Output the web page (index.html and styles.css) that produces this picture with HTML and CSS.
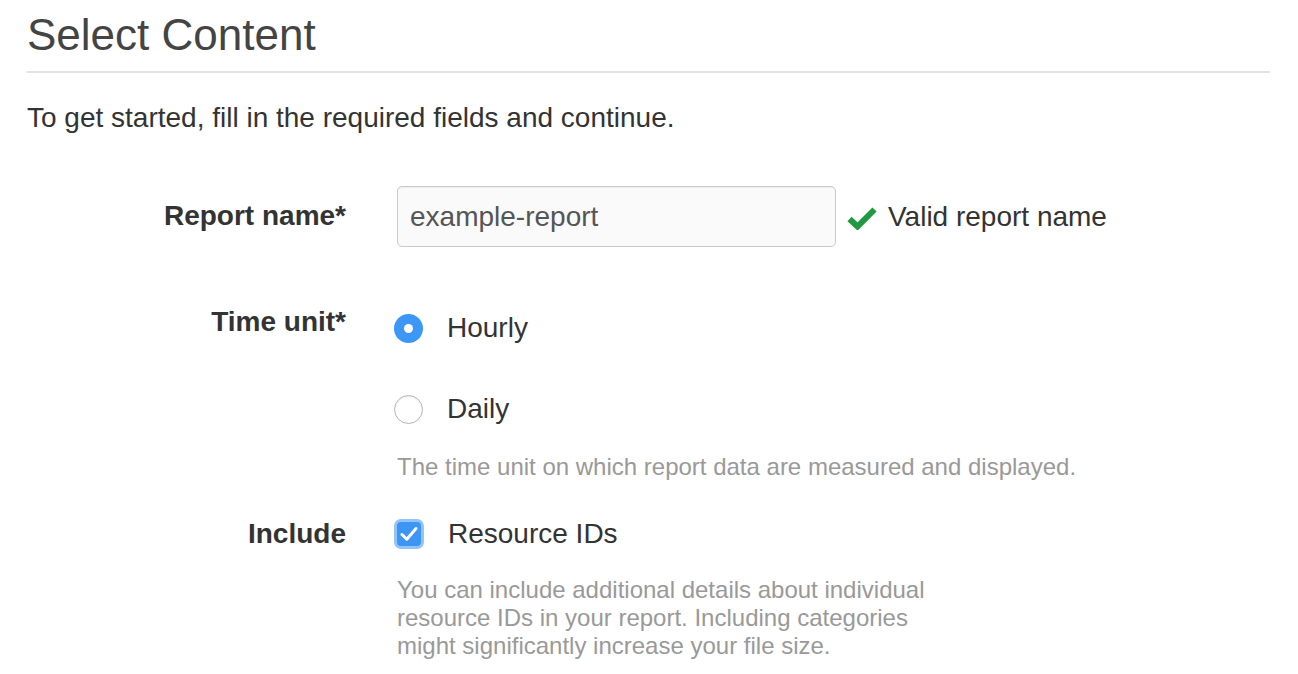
FILE: index.html
```html
<!DOCTYPE html>
<html lang="en">
<head>
<meta charset="utf-8">
<title>Select Content</title>
<link rel="stylesheet" href="styles.css">
</head>
<body>
<div class="page">
  <h1 class="title">Select Content</h1>
  <p class="intro">To get started, fill in the required fields and continue.</p>

  <div class="form">
    <div class="row row-name">
      <label class="label label-name" for="rname">Report name*</label>
      <div class="control control-name">
        <input class="text-input" id="rname" type="text" value="example-report">
        <span class="valid">
          <svg class="valid-icon" width="32" height="24" viewBox="0 0 32 24"><path d="M3.5 13 L11.5 20.5 L28.5 3.5" fill="none" stroke="#1f9a40" stroke-width="6" stroke-linejoin="miter"/></svg>
          <span class="valid-text">Valid report name</span>
        </span>
      </div>
    </div>

    <div class="row row-time">
      <div class="label">Time unit*</div>
      <div class="control">
        <div class="option option-first">
          <span class="radio radio-on"></span>
          <span class="option-text">Hourly</span>
        </div>
        <div class="option option-second">
          <span class="radio"></span>
          <span class="option-text">Daily</span>
        </div>
        <p class="help help-time">The time unit on which report data are measured and displayed.</p>
      </div>
    </div>

    <div class="row row-include">
      <div class="label">Include</div>
      <div class="control">
        <div class="option">
          <span class="checkbox">
            <svg width="18" height="16" viewBox="0 0 18 16"><path d="M2 8.5 L6.8 13.2 L16 2.5" fill="none" stroke="#fff" stroke-width="3" stroke-linecap="round" stroke-linejoin="round"/></svg>
          </span>
          <span class="option-text">Resource IDs</span>
        </div>
        <p class="help help-include">You can include additional details about individual resource IDs in your report. Including categories might significantly increase your file size.</p>
      </div>
    </div>
  </div>
</div>
</body>
</html>
```

FILE: styles.css
```css
html, body {
  margin: 0;
  padding: 0;
  background: #ffffff;
}

body {
  font-family: "Liberation Sans", Arial, Helvetica, sans-serif;
  color: #333333;
}

.page {
  padding: 0 28px 0 27px;
}

.title {
  margin: 0;
  padding-top: 10px;
  padding-bottom: 11px;
  font-size: 44px;
  line-height: 50px;
  font-weight: normal;
  color: #444444;
  border-bottom: 2px solid #e3e3e3;
}

.intro {
  margin: 27px 0 0 0;
  font-size: 28px;
  line-height: 36px;
  color: #333333;
}

.form {
  margin-top: 50px;
}

.row {
  display: grid;
  grid-template-columns: 319px 1fr;
  column-gap: 51px;
  align-items: start;
}

.label {
  text-align: right;
  font-size: 28px;
  font-weight: bold;
  color: #333333;
  line-height: 40px;
}

.label-name {
  line-height: 60px;
}

.control-name {
  display: flex;
  align-items: center;
}

.text-input {
  box-sizing: border-box;
  width: 439px;
  height: 61px;
  margin: 0;
  padding: 0 12px;
  font-family: "Liberation Sans", Arial, Helvetica, sans-serif;
  font-size: 28px;
  color: #555555;
  background: #fafafa;
  border: 1.5px solid #c9c9c9;
  border-radius: 5px;
  box-shadow: inset 0 1px 1px rgba(0, 0, 0, 0.05);
  outline: none;
}

.valid {
  display: flex;
  align-items: center;
  margin-left: 10px;
}

.valid-icon {
  display: block;
  margin-top: 2px;
}

.valid-text {
  margin-left: 10px;
  font-size: 28px;
  color: #333333;
}

.row-time {
  margin-top: 55px;
}

.option {
  display: flex;
  align-items: center;
  height: 40px;
}

.option-first {
  margin-top: 6px;
}

.option-second {
  margin-top: 41px;
}

.option-text {
  font-size: 28px;
  color: #333333;
  margin-left: 24px;
}

.radio {
  box-sizing: border-box;
  width: 29px;
  height: 29px;
  margin-left: -3px;
  border-radius: 50%;
  border: 1.5px solid #b5b5b5;
  background: #ffffff;
  box-shadow: inset 0 1px 2px rgba(0, 0, 0, 0.08);
  flex: none;
  position: relative;
}

.radio-on {
  border: none;
  background: #3d97f7;
  box-shadow: none;
}

.radio-on::after {
  content: "";
  position: absolute;
  width: 9px;
  height: 9px;
  border-radius: 50%;
  background: #ffffff;
  left: 10px;
  top: 10px;
}

.help {
  margin: 0;
  font-size: 24px;
  line-height: 28px;
  color: #999999;
}

.help-time {
  margin-top: 24px;
}

.row-include {
  margin-top: 33px;
}

.checkbox {
  box-sizing: border-box;
  width: 30px;
  height: 30px;
  margin-left: -3px;
  flex: none;
  border-radius: 7px;
  background: #3d95f6;
  border: 3px solid #93c3f9;
  display: flex;
  align-items: center;
  justify-content: center;
}

.checkbox svg {
  display: block;
}

.help-include {
  margin-top: 22px;
  max-width: 540px;
}
```
